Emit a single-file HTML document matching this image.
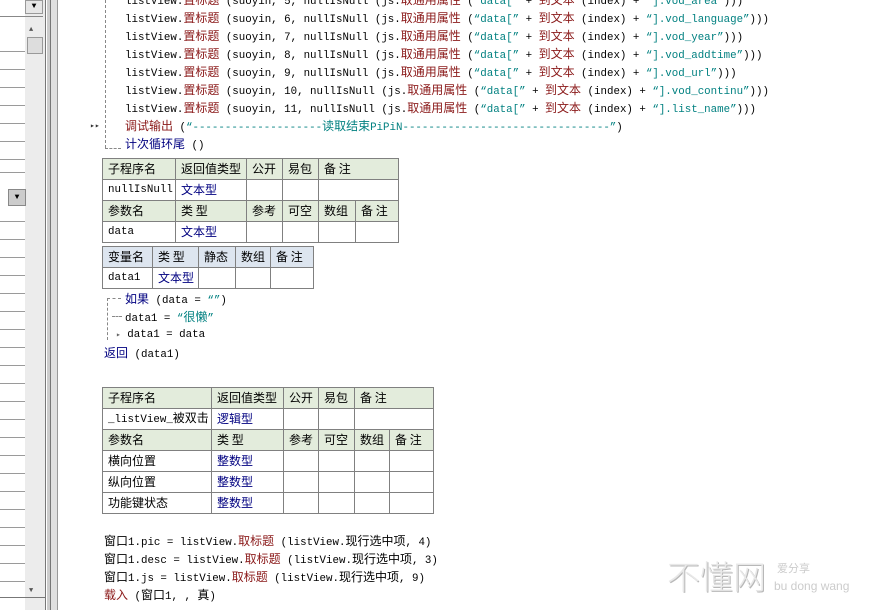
<!DOCTYPE html>
<html><head><meta charset="utf-8"><style>
body{margin:0;width:877px;height:610px;overflow:hidden;background:#fff;position:relative;font-family:"Liberation Mono","Noto Serif CJK SC","Noto Sans CJK SC",monospace;font-size:10.8px;color:#000}
.a{position:absolute;white-space:pre;line-height:16px}
.c{font-family:"Noto Sans CJK SC",sans-serif;font-size:12px}
.r{color:#8b1a1a;font-family:"Noto Sans CJK SC",sans-serif;font-size:12px}.t{color:#008080}.n{color:#000080;font-family:"Noto Sans CJK SC",sans-serif;font-size:12px}
table{position:absolute;border-collapse:collapse;table-layout:fixed;font-size:12px;font-family:"Noto Sans CJK SC",sans-serif}
td{border:1px solid #808080;height:21px;padding:0 0 0 5px;white-space:nowrap;overflow:hidden;box-sizing:border-box;line-height:16px}
.m{font-family:"Liberation Mono",monospace;font-size:10.8px}
.h td{background:#e3ecdc}
.hb td{background:#dde5ef}
.hl{position:absolute;left:0;width:25px;height:1px;background:#9a9a9a}
</style></head><body>
<div class="a" style="left:0;top:0;width:25px;height:610px;background:#fff"></div>
<div class="a" style="left:25px;top:0;width:20px;height:610px;background:#ececec"></div>
<div class="a" style="left:25px;top:0;width:18px;height:14px;background:#e6e6e6;border:1px solid #999;box-sizing:border-box;font-size:8px;text-align:center;line-height:12px">▼</div>
<div class="a" style="left:0;top:16px;width:43px;height:1px;background:#888"></div>
<div class="a" style="left:29px;top:22px;font-size:7px;color:#555">▲</div>
<div class="a" style="left:27px;top:37px;width:14px;height:15px;background:#ddd;border:1px solid #999"></div>
<div class="a" style="left:8px;top:189px;width:16px;height:15px;background:#ccc;border:1px solid #888;font-size:8px;text-align:center;line-height:15px">▼</div>
<div class="a" style="left:29px;top:583px;font-size:7px;color:#555">▼</div>
<div class="a" style="left:45px;top:0;width:1px;height:610px;background:#777"></div>
<div class="a" style="left:47px;top:0;width:3px;height:610px;background:#ccc"></div>
<div class="a" style="left:50px;top:0;width:1px;height:610px;background:#777"></div>
<div class="a" style="left:51px;top:0;width:6px;height:610px;background:#e0e0e0"></div>
<div class="a" style="left:57px;top:0;width:1px;height:610px;background:#999"></div>
<div class="hl" style="top:51px"></div><div class="hl" style="top:69px"></div><div class="hl" style="top:87px"></div><div class="hl" style="top:105px"></div><div class="hl" style="top:123px"></div><div class="hl" style="top:141px"></div><div class="hl" style="top:159px"></div><div class="hl" style="top:172px"></div><div class="hl" style="top:221px"></div><div class="hl" style="top:239px"></div><div class="hl" style="top:257px"></div><div class="hl" style="top:275px"></div><div class="hl" style="top:293px"></div><div class="hl" style="top:311px"></div><div class="hl" style="top:329px"></div><div class="hl" style="top:347px"></div><div class="hl" style="top:365px"></div><div class="hl" style="top:383px"></div><div class="hl" style="top:401px"></div><div class="hl" style="top:419px"></div><div class="hl" style="top:437px"></div><div class="hl" style="top:455px"></div><div class="hl" style="top:473px"></div><div class="hl" style="top:491px"></div><div class="hl" style="top:509px"></div><div class="hl" style="top:527px"></div><div class="hl" style="top:545px"></div><div class="hl" style="top:563px"></div><div class="hl" style="top:581px"></div>
<div class="a" style="left:0;top:597px;width:45px;height:1px;background:#777"></div>

<div class="a" style="left:105px;top:0;width:0;height:148px;border-left:1px dashed #888"></div>
<div class="a" style="left:105px;top:148px;width:16px;border-top:1px dashed #888"></div>
<div class="a" style="left:90px;top:119px;font-size:8px;color:#333">▸▸</div>
<div class="a" style="left:125px;top:-8px">listView.<span class="r">置标题</span> (suoyin, 5, nullIsNull (js.<span class="r">取通用属性</span> (<span class="t">“data[”</span> + <span class="r">到文本</span> (index) + <span class="t">“].vod_area”</span>)))</div>
<div class="a" style="left:125px;top:10px">listView.<span class="r">置标题</span> (suoyin, 6, nullIsNull (js.<span class="r">取通用属性</span> (<span class="t">“data[”</span> + <span class="r">到文本</span> (index) + <span class="t">“].vod_language”</span>)))</div>
<div class="a" style="left:125px;top:28px">listView.<span class="r">置标题</span> (suoyin, 7, nullIsNull (js.<span class="r">取通用属性</span> (<span class="t">“data[”</span> + <span class="r">到文本</span> (index) + <span class="t">“].vod_year”</span>)))</div>
<div class="a" style="left:125px;top:46px">listView.<span class="r">置标题</span> (suoyin, 8, nullIsNull (js.<span class="r">取通用属性</span> (<span class="t">“data[”</span> + <span class="r">到文本</span> (index) + <span class="t">“].vod_addtime”</span>)))</div>
<div class="a" style="left:125px;top:64px">listView.<span class="r">置标题</span> (suoyin, 9, nullIsNull (js.<span class="r">取通用属性</span> (<span class="t">“data[”</span> + <span class="r">到文本</span> (index) + <span class="t">“].vod_url”</span>)))</div>
<div class="a" style="left:125px;top:82px">listView.<span class="r">置标题</span> (suoyin, 10, nullIsNull (js.<span class="r">取通用属性</span> (<span class="t">“data[”</span> + <span class="r">到文本</span> (index) + <span class="t">“].vod_continu”</span>)))</div>
<div class="a" style="left:125px;top:100px">listView.<span class="r">置标题</span> (suoyin, 11, nullIsNull (js.<span class="r">取通用属性</span> (<span class="t">“data[”</span> + <span class="r">到文本</span> (index) + <span class="t">“].list_name”</span>)))</div>
<div class="a" style="left:125px;top:118px"><span class="r">调试输出</span> (<span class="t">“--------------------<span class="c">读取结束</span>PiPiN--------------------------------”</span>)</div>
<div class="a" style="left:125px;top:136px"><span class="n">计次循环尾</span> ()</div>

<table style="left:102px;top:158px;width:296px">
<col style="width:73px"><col style="width:71px"><col style="width:36px"><col style="width:36px"><col style="width:37px"><col style="width:43px">
<tr class="h"><td>子程序名</td><td>返回值类型</td><td>公开</td><td>易包</td><td colspan="2">备 注</td></tr>
<tr><td class="m">nullIsNull</td><td class="n">文本型</td><td></td><td></td><td colspan="2"></td></tr>
<tr class="h"><td>参数名</td><td>类 型</td><td>参考</td><td>可空</td><td>数组</td><td>备 注</td></tr>
<tr><td class="m">data</td><td class="n">文本型</td><td></td><td></td><td></td><td></td></tr>
</table>
<table style="left:102px;top:246px;width:211px">
<col style="width:50px"><col style="width:46px"><col style="width:37px"><col style="width:35px"><col style="width:43px">
<tr class="hb"><td>变量名</td><td>类 型</td><td>静态</td><td>数组</td><td>备 注</td></tr>
<tr><td class="m">data1</td><td class="n">文本型</td><td></td><td></td><td></td></tr>
</table>
<div class="a" style="left:107px;top:298px;height:42px;border-left:1px dashed #888"></div>
<div class="a" style="left:107px;top:298px;width:14px;border-top:1px dashed #888"></div>
<div class="a" style="left:112px;top:316px;width:10px;border-top:1px dashed #888"></div>
<div class="a" style="left:125px;top:291px"><span class="n">如果</span> (data = <span class="t">“”</span>)</div>
<div class="a" style="left:125px;top:309px">data1 = <span class="t">“<span class="c">很懒</span>”</span></div>
<div class="a" style="left:116px;top:327px"><span style="font-size:8px;color:#666">▸</span> data1 = data</div>
<div class="a" style="left:104px;top:345px"><span class="n">返回</span> (data1)</div>

<table style="left:102px;top:387px;width:331px">
<col style="width:109px"><col style="width:72px"><col style="width:35px"><col style="width:36px"><col style="width:35px"><col style="width:44px">
<tr class="h"><td>子程序名</td><td>返回值类型</td><td>公开</td><td>易包</td><td colspan="2">备 注</td></tr>
<tr><td><span class="m">_listView_</span>被双击</td><td class="n">逻辑型</td><td></td><td></td><td colspan="2"></td></tr>
<tr class="h"><td>参数名</td><td>类 型</td><td>参考</td><td>可空</td><td>数组</td><td>备 注</td></tr>
<tr><td>横向位置</td><td class="n">整数型</td><td></td><td></td><td></td><td></td></tr>
<tr><td>纵向位置</td><td class="n">整数型</td><td></td><td></td><td></td><td></td></tr>
<tr><td>功能键状态</td><td class="n">整数型</td><td></td><td></td><td></td><td></td></tr>
</table>

<div class="a" style="left:104px;top:533px"><span class="c">窗口</span>1.pic = listView.<span class="r">取标题</span> (listView.<span class="c">现行选中项</span>, 4)</div>
<div class="a" style="left:104px;top:551px"><span class="c">窗口</span>1.desc = listView.<span class="r">取标题</span> (listView.<span class="c">现行选中项</span>, 3)</div>
<div class="a" style="left:104px;top:569px"><span class="c">窗口</span>1.js = listView.<span class="r">取标题</span> (listView.<span class="c">现行选中项</span>, 9)</div>
<div class="a" style="left:104px;top:587px"><span class="r">载入</span> (<span class="c">窗口</span>1, , <span class="c">真</span>)</div>

<div class="a" style="left:667px;top:555px;font-family:'Noto Sans CJK SC',sans-serif;font-size:33px;font-weight:300;color:#e8e8e8;text-shadow:1px 1px 0 #b8b8b8;line-height:40px">不懂网</div>
<div class="a" style="left:777px;top:560px;font-family:'Noto Sans CJK SC',sans-serif;font-size:11px;color:#ccc">爱分享</div>
<div class="a" style="left:774px;top:578px;font-family:'Liberation Sans',sans-serif;font-size:12px;color:#ccc">bu dong wang</div>
</body></html>
